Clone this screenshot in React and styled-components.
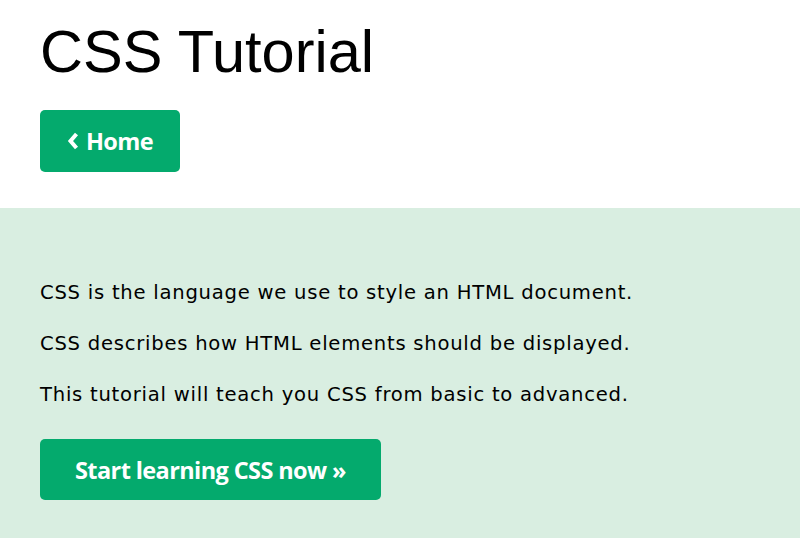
import React from 'react';
import styled, { createGlobalStyle } from 'styled-components';

const GlobalStyle = createGlobalStyle`
  html, body {
    margin: 0;
    padding: 0;
    background: #fff;
  }
`;

const Header = styled.header`
  padding: 16px 40px 36px;
  background: #fff;
`;

const Title = styled.h1`
  margin: 0 0 22px;
  font-family: "Liberation Sans", Arial, sans-serif;
  font-weight: 400;
  font-size: 59.5px;
  line-height: 72px;
  color: #000;
`;

const GreenButton = styled.a`
  display: inline-flex;
  align-items: center;
  justify-content: center;
  gap: 7px;
  box-sizing: border-box;
  height: ${(p) => p.$height || 62}px;
  width: ${(p) => p.$width}px;
  background: #04aa6d;
  color: #fff;
  border-radius: 5px;
  font-family: "Open Sans", "Noto Sans", sans-serif;
  font-weight: 700;
  font-size: 23.5px;
  letter-spacing: -0.6px;
  text-decoration: none;
`;

const Chevron = styled.svg`
  width: 12px;
  height: 18px;
`;

const Intro = styled.section`
  background: #d9eee1;
  padding: 71px 40px 38px;
  min-height: 330px;
  box-sizing: border-box;
`;

const Text = styled.p`
  margin: 0 0 24px;
  font-family: "DejaVu Sans", Verdana, sans-serif;
  font-size: 19.6px;
  line-height: 27px;
  letter-spacing: 0.75px;
  color: #000;
`;

const Actions = styled.div`
  padding-top: 7px;
`;

export default function App() {
  return (
    <>
      <GlobalStyle />
      <Header>
        <Title>CSS Tutorial</Title>
        <GreenButton href="#" $width={140}>
          <Chevron viewBox="0 0 12 18">
            <path d="M9.5 2 L3.5 9 L9.5 16" fill="none" stroke="#fff" strokeWidth="4" strokeLinejoin="miter" />
          </Chevron>
          Home
        </GreenButton>
      </Header>
      <Intro>
        <Text>CSS is the language we use to style an HTML document.</Text>
        <Text>CSS describes how HTML elements should be displayed.</Text>
        <Text>This tutorial will teach you CSS from basic to advanced.</Text>
        <Actions>
          <GreenButton href="#" $width={341} $height={61}>
            Start learning CSS now »
          </GreenButton>
        </Actions>
      </Intro>
    </>
  );
}
